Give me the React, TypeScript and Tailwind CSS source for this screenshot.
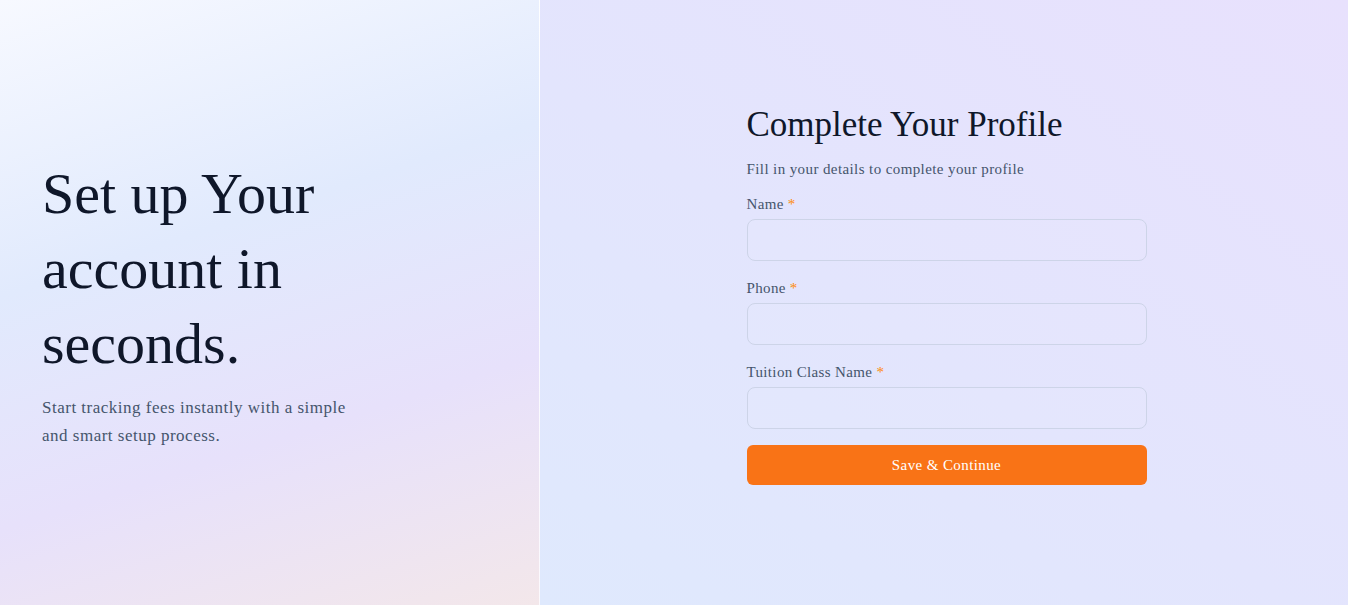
import { useState } from "react";

const serif = "font-['Liberation_Serif','Times_New_Roman',serif]";

interface FieldProps {
  label: string;
  value: string;
  onChange: (v: string) => void;
  type?: string;
}

function Field({ label, value, onChange, type = "text" }: FieldProps) {
  return (
    <div>
      <label className="block text-[15px] leading-5 tracking-[0.35px] text-slate-600 mb-[5px]">
        {label} <span className="text-orange-400">*</span>
      </label>
      <input
        type={type}
        value={value}
        onChange={(e) => onChange(e.target.value)}
        className="w-full h-[42px] rounded-lg border border-[#cdd4e8] bg-white/5 px-3 text-sm text-slate-800 outline-none focus:border-orange-400"
      />
    </div>
  );
}

export default function App() {
  const [name, setName] = useState("");
  const [phone, setPhone] = useState("");
  const [className, setClassName] = useState("");

  return (
    <div className={`flex h-[605px] w-full ${serif}`}>
      {/* Left intro panel */}
      <section className="w-[540px] shrink-0 flex items-center border-r border-white/80 bg-[linear-gradient(162deg,#f7f9ff_0%,#e1eafd_38%,#e7e1fb_68%,#f3e7ea_100%)]">
        <div className="pl-[42px]">
          <h1 className="text-[58px] leading-[75px] text-[#0f172a] max-w-[300px]">
            Set up Your account in seconds.
          </h1>
          <p className="mt-[13px] max-w-[320px] text-[17px] leading-7 tracking-[0.5px] text-slate-600">
            Start tracking fees instantly with a simple and smart setup process.
          </p>
        </div>
      </section>

      {/* Right form panel */}
      <section className="flex-1 flex items-center justify-center pb-[15px] pl-[5px] bg-[linear-gradient(35deg,#dfe9fd_0%,#e3e5fd_45%,#e8e1fd_100%)]">
        <form className="w-[400px]" onSubmit={(e) => e.preventDefault()}>
          <h2 className="text-[35px] leading-10 text-[#0f172a]">Complete Your Profile</h2>
          <p className="mt-[14px] text-[15px] leading-5 tracking-[0.4px] text-slate-600">
            Fill in your details to complete your profile
          </p>

          <div className="mt-[15px] space-y-[17px]">
            <Field label="Name" value={name} onChange={setName} />
            <Field label="Phone" value={phone} onChange={setPhone} type="tel" />
            <Field label="Tuition Class Name" value={className} onChange={setClassName} />
          </div>
          <button
            type="submit"
            className="mt-4 w-full h-10 rounded-md bg-[#f97316] text-[15px] tracking-[0.4px] text-white hover:bg-orange-600"
          >
            Save &amp; Continue
          </button>
        </form>
      </section>
    </div>
  );
}
